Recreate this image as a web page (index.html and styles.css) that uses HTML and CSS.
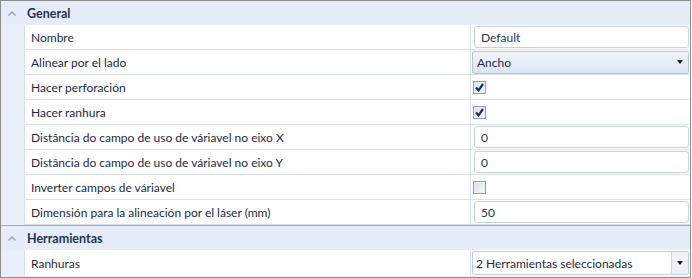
FILE: index.html
```html
<!DOCTYPE html>
<html lang="es">
<head>
<meta charset="utf-8">
<title>Propiedades</title>
<link rel="stylesheet" href="styles.css">
</head>
<body>
<div class="grid">
  <div class="cat cat-first">
    <span class="chev"><svg width="8" height="5" viewBox="0 0 8 5"><polyline points="0.5,4.5 4,1 7.5,4.5" fill="none" stroke="#8ea3bf" stroke-width="1.4"/></svg></span>
    <span class="cat-title">General</span>
  </div>
  <div class="rows">
    <div class="row">
      <div class="label">Nombre</div>
      <div class="value"><div class="textbox">Default</div></div>
    </div>
    <div class="row">
      <div class="label">Alinear por el lado</div>
      <div class="value"><div class="combo"><span class="combo-text">Ancho</span><span class="arrow"></span></div></div>
    </div>
    <div class="row">
      <div class="label">Hacer perforación</div>
      <div class="value"><span class="check checked"><svg width="9" height="9" viewBox="0 0 9 9"><path d="M1 4.6 L3.5 7.4 L8 1" fill="none" stroke="#1a3152" stroke-width="2.2"/></svg></span></div>
    </div>
    <div class="row">
      <div class="label">Hacer ranhura</div>
      <div class="value"><span class="check checked"><svg width="9" height="9" viewBox="0 0 9 9"><path d="M1 4.6 L3.5 7.4 L8 1" fill="none" stroke="#1a3152" stroke-width="2.2"/></svg></span></div>
    </div>
    <div class="row">
      <div class="label">Distância do campo de uso de váriavel no eixo X</div>
      <div class="value"><div class="textbox">0</div></div>
    </div>
    <div class="row">
      <div class="label">Distância do campo de uso de váriavel no eixo Y</div>
      <div class="value"><div class="textbox">0</div></div>
    </div>
    <div class="row">
      <div class="label">Inverter campos de váriavel</div>
      <div class="value"><span class="check"></span></div>
    </div>
    <div class="row">
      <div class="label">Dimensión para la alineación por el láser (mm)</div>
      <div class="value"><div class="textbox">50</div></div>
    </div>
  </div>
  <div class="cat cat-next">
    <span class="chev"><svg width="8" height="5" viewBox="0 0 8 5"><polyline points="0.5,4.5 4,1 7.5,4.5" fill="none" stroke="#8ea3bf" stroke-width="1.4"/></svg></span>
    <span class="cat-title">Herramientas</span>
  </div>
  <div class="rows">
    <div class="row row-last">
      <div class="label">Ranhuras</div>
      <div class="value"><div class="multi"><span class="multi-text">2 Herramientas seleccionadas</span><span class="multi-btn"><span class="arrow"></span></span></div></div>
    </div>
  </div>
</div>
</body>
</html>
```
FILE: styles.css
```css
html, body {
  margin: 0;
  padding: 0;
  background: #ffffff;
}
body {
  font-family: "Lato", "Open Sans", sans-serif;
  font-size: 12px;
  color: #1b2a42;
}
.grid {
  width: 689px;
  height: 276px;
  border: 1px solid #8c8c8c;
  background: #e9eff8;
  display: flex;
  flex-direction: column;
  overflow: hidden;
}
.cat {
  height: 24px;
  display: flex;
  align-items: center;
  background: #e6edf8;
}
.cat-next {
  border-top: 1px solid #a3abb7;
  height: 24px;
}
.chev {
  width: 26px;
  display: flex;
  justify-content: center;
  box-sizing: border-box;
  padding-right: 5px;
}
.chev svg { display: block; }
.cat-title {
  font-weight: 700;
  color: #1e3352;
  font-size: 12.5px;
}
.rows {
  display: flex;
  flex-direction: column;
  padding-left: 23px;
}
.row {
  height: 24px;
  display: flex;
  background: #ffffff;
  border-left: 1px solid #d8e0ea;
  border-bottom: 1px solid #d8e0ea;
}
.row-last {
  height: 26px;
  border-bottom: none;
}
.label {
  width: 439px;
  padding-left: 6px;
  display: flex;
  align-items: center;
  border-right: 1px solid #d8e0ea;
  white-space: nowrap;
  color: #1b2a42;
}
.value {
  flex: 1;
  display: flex;
  align-items: center;
  padding-left: 1px;
  padding-right: 1px;
  min-width: 0;
}
.textbox {
  flex: 1;
  height: 20px;
  margin-left: 2px;
  border: 1px solid #c6d1df;
  border-radius: 3px;
  background: #ffffff;
  display: flex;
  align-items: center;
  padding-left: 6px;
  color: #26364f;
}
.combo {
  flex: 1;
  height: 21px;
  border: 1px solid #b9c6d8;
  border-radius: 2px;
  background: linear-gradient(#f1f5fb, #dbe5f3);
  display: flex;
  align-items: center;
  justify-content: space-between;
  padding-left: 4px;
  padding-right: 5px;
  color: #1d2f4d;
}
.arrow {
  width: 0;
  height: 0;
  border-left: 3.5px solid transparent;
  border-right: 3.5px solid transparent;
  border-top: 4px solid #1a1a1a;
}
.check {
  width: 11px;
  height: 11px;
  margin-left: 1px;
  border: 1px solid #8f9cb2;
  background: linear-gradient(135deg, #d6dfed, #f5f8fc);
  box-shadow: inset 0 0 0 1px #eaeff7;
  display: flex;
  align-items: center;
  justify-content: center;
}
.check svg { display: block; }
.multi {
  flex: 1;
  height: 22px;
  border: 1px solid #bfcadb;
  border-radius: 2px;
  background: #ffffff;
  display: flex;
  align-items: stretch;
}
.multi-text {
  flex: 1;
  display: flex;
  align-items: center;
  padding-left: 3px;
  color: #1b2a42;
}
.multi-btn {
  width: 16px;
  border-left: 1px solid #cdd6e3;
  background: #eef2f8;
  display: flex;
  align-items: center;
  justify-content: center;
}
```
